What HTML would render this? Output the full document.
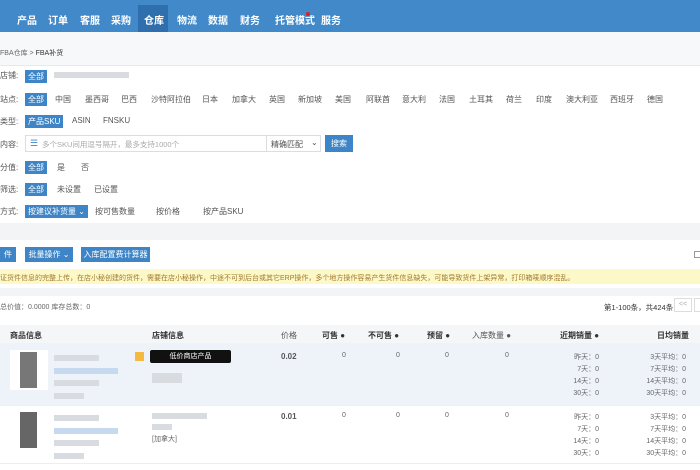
<!DOCTYPE html><html><head><meta charset="utf-8"><style>
*{margin:0;padding:0;box-sizing:border-box}
body{width:700px;height:470px;overflow:hidden;background:#fff;font-family:"Liberation Sans","Noto Sans CJK SC",sans-serif;font-size:8px;color:#444;position:relative}
.a{position:absolute;white-space:nowrap}
.nav{position:absolute;left:0;top:0;width:700px;height:32px;background:#4189c9}
.nav span{position:absolute;top:12px;color:#fff;font-size:10px;font-weight:bold}
.tag{background:#3d85c6;color:#fff;padding:1px 3px}
.btn{position:absolute;background:#3d85c6;color:#fff;height:15px;line-height:15px;text-align:center;font-size:8px}
.g{color:#555}
.sm{font-size:7px;color:#666}
.blur{position:absolute;background:#d8dbe0;height:6px}
.bl{position:absolute;background:#c7d9ee;height:6px}
</style></head><body>
<div class="nav">
<div class="a" style="left:138px;top:5px;width:30px;height:27px;background:#2f6fae"></div>
<span style="left:17px">产品</span><span style="left:48px">订单</span><span style="left:80px">客服</span><span style="left:111px">采购</span><span style="left:144px">仓库</span><span style="left:177px">物流</span><span style="left:208px">数据</span><span style="left:240px">财务</span><span style="left:275px">托管模式</span><span style="left:321px">服务</span>
<div class="a" style="left:306px;top:12px;width:4px;height:4px;border-radius:2px;background:#e02020"></div>
</div>
<div class="a" style="left:0;top:32px;width:700px;height:34px;background:#f7f8fa;border-bottom:1px solid #e8e8e8"></div>
<div class="a sm" style="left:0;top:48px">FBA仓库 &gt; <span style="color:#333">FBA补货</span></div>
<div class="a g" style="left:0;top:70px">店铺:</div><div class="a tag" style="left:25px;top:70px">全部</div><div class="blur" style="left:54px;top:72px;width:75px"></div>
<div class="a g" style="left:0;top:94px">站点:</div><div class="a tag" style="left:25px;top:93px">全部</div>
<div class="a g" style="left:55px;top:94px">中国</div>
<div class="a g" style="left:85px;top:94px">墨西哥</div><div class="a g" style="left:121px;top:94px">巴西</div><div class="a g" style="left:151px;top:94px">沙特阿拉伯</div><div class="a g" style="left:202px;top:94px">日本</div><div class="a g" style="left:232px;top:94px">加拿大</div><div class="a g" style="left:269px;top:94px">英国</div><div class="a g" style="left:298px;top:94px">新加坡</div><div class="a g" style="left:335px;top:94px">美国</div><div class="a g" style="left:366px;top:94px">阿联酋</div><div class="a g" style="left:402px;top:94px">意大利</div><div class="a g" style="left:439px;top:94px">法国</div><div class="a g" style="left:469px;top:94px">土耳其</div><div class="a g" style="left:506px;top:94px">荷兰</div><div class="a g" style="left:536px;top:94px">印度</div><div class="a g" style="left:566px;top:94px">澳大利亚</div><div class="a g" style="left:610px;top:94px">西班牙</div><div class="a g" style="left:647px;top:94px">德国</div>
<div class="a g" style="left:0;top:116px">类型:</div><div class="a tag" style="left:25px;top:115px">产品SKU</div><div class="a g" style="left:72px;top:116px">ASIN</div><div class="a g" style="left:103px;top:116px">FNSKU</div>
<div class="a g" style="left:0;top:139px">内容:</div>
<div class="a" style="left:25px;top:135px;width:296px;height:17px;border:1px solid #ddd;background:#fff"></div>
<div class="a" style="left:30px;top:138px;color:#3d85c6;font-size:9px">☰</div>
<div class="a" style="left:42px;top:139px;color:#aaa;font-size:7.5px">多个SKU间用逗号隔开，最多支持1000个</div>
<div class="a" style="left:266px;top:135px;width:55px;height:17px;border-left:1px solid #ddd"></div>
<div class="a g" style="left:271px;top:139px">精确匹配</div><div class="a g" style="left:311px;top:138px">⌄</div>
<div class="btn" style="left:325px;top:135px;width:28px;height:17px;line-height:17px">搜索</div>
<div class="a g" style="left:0;top:162px">分值:</div><div class="a tag" style="left:25px;top:161px">全部</div><div class="a g" style="left:57px;top:162px">是</div><div class="a g" style="left:81px;top:162px">否</div>
<div class="a g" style="left:0;top:184px">筛选:</div><div class="a tag" style="left:25px;top:183px">全部</div><div class="a g" style="left:57px;top:184px">未设置</div><div class="a g" style="left:94px;top:184px">已设置</div>
<div class="a g" style="left:0;top:206px">方式:</div><div class="a tag" style="left:25px;top:205px">按建议补货量 ⌄</div><div class="a g" style="left:95px;top:206px">按可售数量</div><div class="a g" style="left:156px;top:206px">按价格</div><div class="a g" style="left:203px;top:206px">按产品SKU</div>
<div class="a" style="left:0;top:223px;width:700px;height:17px;background:#f3f4f6"></div>
<div class="btn" style="left:0;top:247px;width:16px">件</div>
<div class="btn" style="left:25px;top:247px;width:48px">批量操作 ⌄</div>
<div class="btn" style="left:81px;top:247px;width:69px">入库配置费计算器</div>
<div class="a" style="left:694px;top:251px;width:7px;height:7px;border:1px solid #999"></div>
<div class="a" style="left:0;top:269px;width:700px;height:15px;background:#fdf8c8"></div>
<div class="a" style="left:0;top:273px;font-size:7px;color:#a07a30">证货件信息的完整上传，在店小秘创建的货件，需要在店小秘操作，中途不可到后台或其它ERP操作，多个地方操作容易产生货件信息缺失，可能导致货件上架异常，打印箱唛顺序混乱。</div>
<div class="a" style="left:0;top:288px;width:700px;height:8px;background:#f3f4f6"></div>
<div class="a sm" style="left:0;top:302px">总价值：0.0000 库存总数：0</div>
<div class="a" style="left:604px;top:302px;color:#333;font-size:7.5px">第1-100条，共424条</div>
<div class="a" style="left:674px;top:298px;width:18px;height:14px;border:1px solid #ddd;color:#aaa;text-align:center;line-height:12px;font-size:7px;background:#fff">&lt;&lt;</div>
<div class="a" style="left:694px;top:298px;width:10px;height:14px;border:1px solid #ddd"></div>
<div class="a" style="left:0;top:325px;width:700px;height:18px;background:#f5f6f8"></div>
<div class="a" style="left:10px;top:330px;color:#333;font-weight:bold">商品信息</div><div class="a" style="left:152px;top:330px;color:#333;font-weight:bold">店铺信息</div><div class="a g" style="left:281px;top:330px">价格</div><div class="a" style="left:322px;top:330px;color:#333;font-weight:bold">可售 ●</div><div class="a" style="left:368px;top:330px;color:#333;font-weight:bold">不可售 ●</div><div class="a" style="left:427px;top:330px;color:#333;font-weight:bold">预留 ●</div><div class="a g" style="left:472px;top:330px">入库数量 ●</div><div class="a" style="left:560px;top:330px;color:#333;font-weight:bold">近期销量 ●</div><div class="a" style="left:657px;top:330px;color:#333;font-weight:bold">日均销量</div>
<div class="a" style="left:0;top:343px;width:700px;height:62px;background:#eef3fa"></div>
<div class="a" style="left:10px;top:350px;width:38px;height:40px;background:#fff"></div>
<div class="a" style="left:20px;top:352px;width:17px;height:36px;background:#777"></div>
<div class="blur" style="left:54px;top:355px;width:45px"></div><div class="bl" style="left:54px;top:368px;width:64px"></div><div class="blur" style="left:54px;top:380px;width:45px"></div><div class="blur" style="left:54px;top:393px;width:30px"></div>
<div class="a" style="left:135px;top:352px;width:9px;height:9px;background:#f5b940"></div>
<div class="a" style="left:150px;top:350px;width:81px;height:13px;background:#111;border-radius:2px;color:#fff;font-size:7px;text-align:center;line-height:13px">低价商店产品</div>
<div class="blur" style="left:152px;top:373px;width:30px;height:10px"></div>
<div class="a g" style="left:281px;top:352px;font-weight:bold">0.02</div>
<div class="a sm" style="left:342px;top:352px">0</div><div class="a sm" style="left:396px;top:352px">0</div><div class="a sm" style="left:445px;top:352px">0</div><div class="a sm" style="left:505px;top:352px">0</div>
<div class="a" style="left:0;top:405px;width:700px;height:1px;background:#eee"></div>
<div class="a" style="left:20px;top:412px;width:17px;height:36px;background:#666"></div>
<div class="blur" style="left:54px;top:415px;width:45px"></div><div class="bl" style="left:54px;top:428px;width:64px"></div><div class="blur" style="left:54px;top:440px;width:45px"></div><div class="blur" style="left:54px;top:453px;width:30px"></div>
<div class="blur" style="left:152px;top:413px;width:55px"></div><div class="blur" style="left:152px;top:424px;width:20px"></div>
<div class="a sm" style="left:152px;top:434px">[加拿大]</div>
<div class="a g" style="left:281px;top:412px;font-weight:bold">0.01</div>
<div class="a sm" style="left:342px;top:412px">0</div><div class="a sm" style="left:396px;top:412px">0</div><div class="a sm" style="left:445px;top:412px">0</div><div class="a sm" style="left:505px;top:412px">0</div>
<div class="a sm" style="left:560px;top:352px;text-align:right;width:39px;line-height:12px">昨天：0<br>7天：0<br>14天：0<br>30天：0</div>
<div class="a sm" style="left:630px;top:352px;text-align:right;width:56px;line-height:12px">3天平均：0<br>7天平均：0<br>14天平均：0<br>30天平均：0</div>
<div class="a sm" style="left:560px;top:412px;text-align:right;width:39px;line-height:12px">昨天：0<br>7天：0<br>14天：0<br>30天：0</div>
<div class="a sm" style="left:630px;top:412px;text-align:right;width:56px;line-height:12px">3天平均：0<br>7天平均：0<br>14天平均：0<br>30天平均：0</div>
<div class="a" style="left:0;top:463px;width:700px;height:1px;background:#eee"></div>
</body></html>
